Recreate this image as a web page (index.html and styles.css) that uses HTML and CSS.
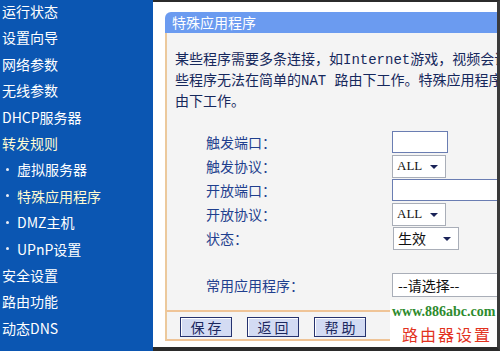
FILE: index.html
```html
<!DOCTYPE html>
<html lang="zh-CN">
<head>
<meta charset="utf-8">
<title>特殊应用程序</title>
<link rel="stylesheet" href="styles.css">
</head>
<body>
<div class="page">
  <nav class="sidebar">
    <ul class="menu">
      <li>运行状态</li>
      <li>设置向导</li>
      <li>网络参数</li>
      <li>无线参数</li>
      <li>DHCP服务器</li>
      <li class="active">转发规则</li>
      <li class="sub">虚拟服务器</li>
      <li class="sub active">特殊应用程序</li>
      <li class="sub">DMZ主机</li>
      <li class="sub">UPnP设置</li>
      <li>安全设置</li>
      <li>路由功能</li>
      <li>动态DNS</li>
    </ul>
  </nav>
  <main class="content">
    <section class="panel">
      <h1 class="panel-title">特殊应用程序</h1>
      <div class="panel-body">
        <p class="desc">某些程序需要多条连接，如Internet游戏，视频会议等。这<br>些程序无法在简单的NAT 路由下工作。特殊应用程序能够使某些这样的应用程序能够在NAT路<br>由下工作。</p>
        <div class="form">
          <span class="label">触发端口：</span>
          <div class="field"><span class="input input-short"></span></div>
          <span class="label">触发协议：</span>
          <div class="field"><span class="select select-all"><span class="sel-text">ALL</span><span class="arrow"></span></span></div>
          <span class="label">开放端口：</span>
          <div class="field"><span class="input input-long"></span></div>
          <span class="label">开放协议：</span>
          <div class="field"><span class="select select-all"><span class="sel-text">ALL</span><span class="arrow"></span></span></div>
          <span class="label">状态：</span>
          <div class="field"><span class="select select-state"><span class="sel-text cjk">生效</span><span class="arrow"></span></span></div>
        </div>
        <div class="form form-common">
          <span class="label">常用应用程序：</span>
          <div class="field"><span class="select select-common"><span class="sel-text cjk">--请选择--</span></span></div>
        </div>
      </div>
      <div class="panel-foot">
        <button class="btn">保 存</button>
        <button class="btn">返 回</button>
        <button class="btn">帮 助</button>
      </div>
    </section>
    <div class="watermark">
      <div class="wm-url">www.886abc.com</div>
      <div class="wm-cn">路由器设置</div>
    </div>
  </main>
</div>
</body>
</html>
```

FILE: styles.css
```css
* { box-sizing: border-box; }
html, body {
  margin: 0;
  padding: 0;
  width: 500px;
  height: 351px;
  overflow: hidden;
  background: #ffffff;
  font-family: "Noto Sans CJK SC", "Noto Sans", sans-serif;
}
.page {
  display: flex;
  width: 500px;
  height: 351px;
}
.sidebar {
  width: 153px;
  flex: none;
  background: #0b56b2;
  color: #ffffff;
  overflow: hidden;
}
.menu {
  list-style: none;
  margin: -2px 0 0 0;
  padding: 0;
}
.menu li {
  height: 26.4px;
  line-height: 26.4px;
  font-size: 14px;
  padding-left: 2px;
  white-space: nowrap;
  display: flex;
  align-items: center;
}
.menu li.active { color: #fffbd2; }
.menu li.sub { padding-left: 6px; }
.menu li.sub::before {
  content: "";
  width: 3px;
  height: 3px;
  border-radius: 50%;
  background: #e8ecf6;
  margin-right: 8px;
}
.content {
  position: relative;
  flex: 1;
  min-width: 0;
  border-top: 2px solid #2b2b2b;
  border-bottom: 4px solid #2b2b2b;
  border-right: 3px solid #3a3a3a;
  padding: 10px 0 6px 12px;
  display: flex;
  overflow: hidden;
}
.panel {
  flex: 1;
  min-width: 0;
  display: flex;
  flex-direction: column;
}
.panel-title {
  margin: 0;
  height: 21px;
  line-height: 21px;
  background: #6b9bf0;
  color: #ffffff;
  font-size: 14px;
  font-weight: normal;
  padding-left: 7px;
  border-radius: 6px 0 0 0;
}
.panel-body {
  flex: 1;
  background: #f4f4f4;
  border-left: 2px solid #ecc99c;
  overflow: hidden;
  padding: 17px 0 0 8px;
}
.desc {
  margin: 0;
  font-family: "Liberation Mono", "Noto Sans CJK SC", monospace;
  font-size: 14px;
  line-height: 21px;
  color: #16285c;
  white-space: nowrap;
}
.form {
  display: grid;
  grid-template-columns: 186px auto;
  grid-auto-rows: 24px;
  margin: 17px 0 0 31px;
  align-items: center;
}
.form-common {
  margin-top: 23px;
}
.label {
  font-size: 14px;
  color: #1f3f8e;
  white-space: nowrap;
}
.field {
  display: flex;
  align-items: center;
  white-space: nowrap;
}
.input {
  display: block;
  height: 22px;
  background: #ffffff;
  border: 1px solid #6a7db2;
}
.input-short { width: 56px; }
.input-long { width: 140px; }
.select {
  display: flex;
  align-items: center;
  height: 23px;
  background: #ffffff;
  border: 1px solid #a9aeb8;
  padding-left: 4px;
  position: relative;
}
.select-all { width: 54px; }
.select-state { width: 66px; margin-left: 1px; }
.select-common { width: 130px; height: 24px; padding-left: 5px; }
.sel-text {
  font-family: "Liberation Serif", serif;
  font-size: 13px;
  color: #111111;
}
.sel-text.cjk {
  font-family: "Noto Sans CJK SC", sans-serif;
  font-size: 14px;
}
.arrow {
  margin-left: auto;
  margin-right: 7px;
  width: 0;
  height: 0;
  border-left: 4px solid transparent;
  border-right: 4px solid transparent;
  border-top: 4px solid #1a2358;
  margin-top: 2px;
}
.panel-foot {
  height: 31px;
  background: #f4f4f4;
  border-top: 2px solid #efc497;
  border-bottom: 2px solid #efc497;
  border-left: 2px solid #ecc99c;
  display: flex;
  align-items: flex-start;
  gap: 15px;
  padding: 5px 0 0 13px;
}
.btn {
  width: 52px;
  height: 20px;
  padding: 0;
  background: #d3dbf3;
  border: 1px solid #25326e;
  box-shadow: inset 1px 1px 0 #ffffff;
  font-family: "Noto Sans CJK SC", sans-serif;
  font-size: 14px;
  line-height: 18px;
  color: #1b275e;
}
.watermark {
  position: absolute;
  left: 237px;
  top: 298px;
  width: 110px;
  height: 53px;
  background: #ffffff;
  padding: 2px 0 0 2px;
}
.wm-url {
  font-family: "Liberation Serif", serif;
  font-weight: bold;
  font-size: 14px;
  color: #2e8b2e;
  line-height: 20px;
}
.wm-cn {
  font-family: "Noto Sans CJK SC", sans-serif;
  font-size: 16px;
  color: #e2321e;
  letter-spacing: 2px;
  line-height: 24px;
  padding-left: 10px;
}
```
